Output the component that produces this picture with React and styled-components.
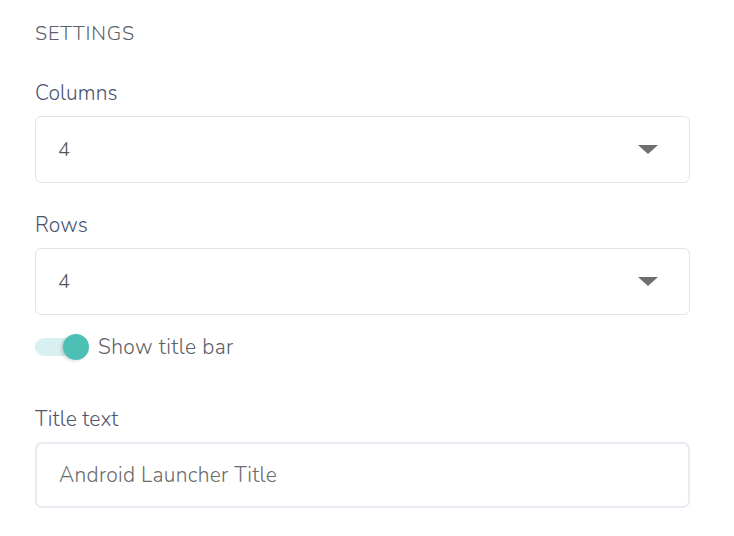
import React, { useState } from 'react';
import styled, { createGlobalStyle } from 'styled-components';

const GlobalStyle = createGlobalStyle`
  body {
    margin: 0;
    background: #fff;
    font-family: 'Nunito', 'Lato', 'Noto Sans', sans-serif;
    font-weight: 300;
  }
`;

const App = () => {
  const [columns, setColumns] = useState('4');
  const [rows, setRows] = useState('4');
  const [showTitle, setShowTitle] = useState(true);
  const [title, setTitle] = useState('');

  return (
    <Panel>
      <GlobalStyle />
      <Heading>SETTINGS</Heading>

      <Field>
        <Label>Columns</Label>
        <SelectWrap>
          <Select value={columns} onChange={(e) => setColumns(e.target.value)}>
            {[2, 3, 4, 5, 6].map((n) => (
              <option key={n} value={n}>{n}</option>
            ))}
          </Select>
          <Caret />
        </SelectWrap>
      </Field>

      <Field>
        <Label>Rows</Label>
        <SelectWrap>
          <Select value={rows} onChange={(e) => setRows(e.target.value)}>
            {[2, 3, 4, 5, 6].map((n) => (
              <option key={n} value={n}>{n}</option>
            ))}
          </Select>
          <Caret />
        </SelectWrap>
      </Field>

      <ToggleRow onClick={() => setShowTitle(!showTitle)}>
        <Track $on={showTitle}>
          <Knob $on={showTitle} />
        </Track>
        <ToggleText>Show title bar</ToggleText>
      </ToggleRow>

      <Field $top={46}>
        <Label>Title text</Label>
        <TextInput
          value={title}
          placeholder="Android Launcher Title"
          onChange={(e) => setTitle(e.target.value)}
          autoFocus
        />
      </Field>
    </Panel>
  );
};

export default App;

const Panel = styled.div`
  width: 655px;
  padding: 22px 0 0 35px;
`;

const Heading = styled.div`
  font-size: 20px;
  color: #5b5f6b;
  letter-spacing: 0.8px;
  line-height: 24px;
  margin-bottom: 35px;
`;

const Field = styled.div`
  margin-top: ${(p) => p.$top || 0}px;
  margin-bottom: 30px;
`;

const Label = styled.div`
  font-size: 21px;
  color: #4c5470;
  letter-spacing: 0.1px;
  line-height: 24px;
  margin-bottom: 11px;
`;

const SelectWrap = styled.div`
  position: relative;
`;

const Select = styled.select`
  appearance: none;
  width: 100%;
  height: 67px;
  padding: 0 22px;
  border: 1px solid #e1e2ec;
  border-radius: 6px;
  background: #fff;
  font-family: inherit;
  font-weight: 300;
  font-size: 20px;
  color: #555;
  outline: none;
`;

const Caret = styled.span`
  position: absolute;
  right: 32px;
  top: 29px;
  width: 0;
  height: 0;
  border-left: 10px solid transparent;
  border-right: 10px solid transparent;
  border-top: 9px solid #6e6e6e;
  pointer-events: none;
`;

const ToggleRow = styled.div`
  display: flex;
  align-items: center;
  gap: 10px;
  margin-top: -12px;
  height: 28px;
  cursor: pointer;
`;

const Track = styled.div`
  position: relative;
  width: 53px;
  height: 18px;
  border-radius: 9px;
  background: ${(p) => (p.$on ? '#d8f0ef' : '#e6e6e6')};
`;

const Knob = styled.div`
  position: absolute;
  top: -4px;
  left: ${(p) => (p.$on ? '28px' : '-2px')};
  width: 26px;
  height: 26px;
  border-radius: 50%;
  background: ${(p) => (p.$on ? '#4dc0b5' : '#fff')};
  box-shadow: -2px 1px 3px rgba(0, 0, 0, 0.15);
`;

const ToggleText = styled.span`
  font-size: 21px;
  letter-spacing: 0.4px;
  color: #5f6066;
`;

const TextInput = styled.input`
  box-sizing: border-box;
  width: 100%;
  height: 66px;
  padding: 0 22px;
  border: 2px solid #e8ebf1;
  border-radius: 7px;
  font-family: inherit;
  font-weight: 300;
  font-size: 21px;
  letter-spacing: 0.3px;
  color: #555;
  outline: none;
  caret-color: #444;

  &::placeholder {
    color: #6a6a6a;
  }
`;
